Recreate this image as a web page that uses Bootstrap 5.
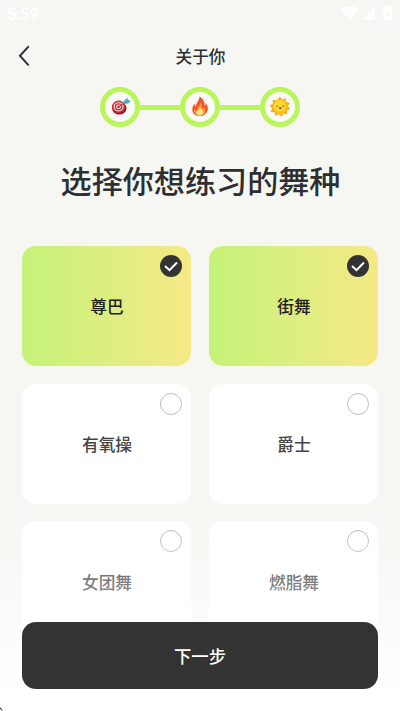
<!DOCTYPE html>
<html lang="zh-CN">
<head>
<meta charset="utf-8">
<meta name="viewport" content="width=device-width, initial-scale=1">
<title>关于你</title>
<link href="https://cdn.jsdelivr.net/npm/bootstrap@5.3.0/dist/css/bootstrap.min.css" rel="stylesheet">
<style>
  body { font-family: "Noto Sans CJK SC", sans-serif; font-weight: 500; color: #2d2f33; background: #f6f7f2; }
  .screen { height: 711px; }
  .status-bar { height: 28px; padding: 0 7px 0 7px; font: 500 16px/29px Roboto, sans-serif; color: #fff; }
  .status-icons { height: 28px; }
  .top-nav { height: 56px; padding: 0 16px; }
  .top-nav button { width: 16px; height: 24px; }
  .page-name { font-size: 16.7px; line-height: 24px; font-weight: 500; padding: 0 0 1px 1px; }
  .steps { margin-top: 3px; height: 40px; }
  .step { width: 40px; height: 40px; border: 5px solid #b9f55b; background: #f9faf7; }
  .step-line { width: 40px; height: 5px; background: #b9f55b; }
  .headline { margin: 30px 0 0; padding: 0 0 1px 1px; font-size: 31.1px; line-height: 46px; font-weight: 500; }
  .dance-grid { padding: 42px 22px 0; --bs-gutter-x: 18px; }
  .dance-list { --bs-gutter-x: 18px; --bs-gutter-y: 17.6px; }
  .dance { height: 120px; padding: 2px 0 0 1px; border-radius: 14px; font-size: 16.7px; color: #444; background: #fff; }
  .dance.picked { color: #222; background: linear-gradient(90deg, #c5f37a, #f5e985); }
  .dance.low { color: #2c2c2c; }
  .tick { top: 9px; right: 9px; width: 22px; height: 22px; border: 1px solid #bebebe; }
  .low .tick { border-color: #b4b4b4; }
  .picked .tick { border: 0; background: #333; }
  .bottom-fade { padding: 116px 22px 22px; background: linear-gradient(rgba(255,255,255,0), #fff 95%); }
  .next-btn { height: 67px; border-radius: 14px; font-size: 17.3px; font-weight: 500; color: #fff; background: #333; border: 0; }
  .corner-mark { left: 0; bottom: 0; }
</style>
</head>
<body>
<div class="screen position-relative overflow-hidden">
  <div class="status-bar d-flex justify-content-between">
    <span>5:59</span>
    <svg class="status-icons" width="52" height="28" viewBox="342 0 52 28" fill="#fff">
      <path d="M342 9.500Q351 2.500 360 9.500L351 20.300Z"/>
      <path d="M376 7V20H363Z"/>
      <path fill-rule="evenodd" d="M386 7V5.500H391V7H392Q393 7 393 8V19Q393 20 392 20H385.500Q384.500 20 384.500 19V8Q384.500 7 385.500 7ZM389.500 9L386.500 14H388.300V18L391 13H389.200Z"/>
    </svg>
  </div>

  <header class="top-nav d-flex align-items-center justify-content-between">
    <button class="btn p-0 border-0 d-flex align-items-center" aria-label="返回">
      <svg width="16" height="24" viewBox="0 0 16 24" fill="none" stroke="#2d2f33" stroke-width="2" stroke-linecap="round"><path d="M12.200 2.800L4 11.800L12.200 20.800"/></svg>
    </button>
    <h1 class="page-name m-0">关于你</h1>
    <span class="px-2"></span>
  </header>

  <div class="steps d-flex align-items-center justify-content-center">
    <div class="step rounded-circle d-flex align-items-center justify-content-center">
      <svg width="30" height="30" viewBox="0 0 30 30">
        <ellipse cx="14.300" cy="16.300" rx="7.200" ry="6.300" fill="#8d1b2a"/>
        <ellipse cx="13.600" cy="14.800" rx="6.600" ry="6.200" fill="#c9303c"/>
        <ellipse cx="13.600" cy="14.800" rx="5" ry="4.600" fill="#f8e5e5"/>
        <ellipse cx="13.600" cy="14.800" rx="3.900" ry="3.600" fill="#c9303c"/>
        <ellipse cx="13.600" cy="14.800" rx="2.500" ry="2.200" fill="#f8e5e5"/>
        <circle cx="13.600" cy="14.800" r="1.300" fill="#b3202f"/>
        <path d="M14 14.800L20.500 10.500" stroke="#8a6848" stroke-width="1.200"/>
        <path d="M18.300 11.800L19 8.300L23.200 5.800L23 8L26 9L23 11.800Z" fill="#58bdd0"/>
        <path d="M17.500 12.200L24 8.500" stroke="#2b7e97" stroke-width=".8"/>
      </svg>
    </div>
    <div class="step-line"></div>
    <div class="step rounded-circle d-flex align-items-center justify-content-center">
      <svg width="30" height="30" viewBox="0 0 30 30">
        <path d="M14.500 4.500C18.500 7 20 10 19.500 14C20.600 13.300 20.800 12 20.700 10.800C23 14 23.800 17.500 21.600 20.500C19.500 23.500 16.800 24 14.800 24C10.200 24 7.300 21.300 7.300 17.700C7.300 15 8.300 13.200 9.500 11.500C9.500 13 9.700 14 10.800 14.700C10.500 11 14.500 9 14.500 4.500Z" fill="#f0532d"/>
        <path d="M15.400 10C17 13 16.800 15 18 17C18.800 16.500 19.200 15.800 19.400 15C21.500 19.500 19.500 23.500 15 23.500C10 23.500 8.400 20 9.500 16.500C10 18 10.800 18.500 12 18.700C11.500 15 15.500 14 15.400 10Z" fill="#fc9a2c"/>
        <path d="M15 14.500C15.500 17.500 18.500 18 18 21C17.700 22.500 16.300 23.500 14.800 23.500C12.500 23.500 11 22 11.500 19.800C12.800 18.800 14.500 17.500 15 14.500Z" fill="#ffe98a"/>
      </svg>
    </div>
    <div class="step-line"></div>
    <div class="step rounded-circle d-flex align-items-center justify-content-center">
      <svg width="30" height="30" viewBox="0 0 30 30">
        <path d="M15 4.500L17.200 7.700L20.700 6L21 9.800L24.800 11L22.700 14L25.300 17L22 18.600L22.200 22.200L18.500 21.700L16.500 25L14 22L10.500 24L9.600 20.200L5.500 20L7.200 16.500L4.600 13.500L8.200 11.800L7.500 7.800L11.500 8.400Z" fill="#f9a91d"/>
        <circle cx="15" cy="14.800" r="7.600" fill="#fdbf1d"/>
        <circle cx="14.500" cy="13.800" r="5.800" fill="#ffd838"/>
        <path d="M11.500 14.300Q12.300 13.300 13.100 14.300M17.400 14.300Q18.200 13.300 19 14.300" fill="none" stroke="#68451b" stroke-width=".9"/>
        <path d="M13.500 15.500H17.200Q15.400 18.500 13.500 15.500Z" fill="#7b3a1d"/>
      </svg>
    </div>
  </div>

  <h2 class="headline text-center">选择你想练习的舞种</h2>

  <main class="dance-grid">
    <div class="row row-cols-2 dance-list mt-0">
      <div class="col mt-0"><div class="dance picked position-relative d-flex align-items-center justify-content-center">尊巴<span class="tick position-absolute rounded-circle d-flex"><svg width="22" height="22" viewBox="0 0 22 22" fill="none" stroke="#fff" stroke-width="2"><path d="M5 11L9.500 15.200L17 7.500"/></svg></span></div></div>
      <div class="col mt-0"><div class="dance picked position-relative d-flex align-items-center justify-content-center">街舞<span class="tick position-absolute rounded-circle d-flex"><svg width="22" height="22" viewBox="0 0 22 22" fill="none" stroke="#fff" stroke-width="2"><path d="M5 11L9.500 15.200L17 7.500"/></svg></span></div></div>
      <div class="col"><div class="dance position-relative d-flex align-items-center justify-content-center">有氧操<span class="tick position-absolute rounded-circle"></span></div></div>
      <div class="col"><div class="dance position-relative d-flex align-items-center justify-content-center">爵士<span class="tick position-absolute rounded-circle"></span></div></div>
      <div class="col"><div class="dance low position-relative d-flex align-items-center justify-content-center">女团舞<span class="tick position-absolute rounded-circle"></span></div></div>
      <div class="col"><div class="dance low position-relative d-flex align-items-center justify-content-center">燃脂舞<span class="tick position-absolute rounded-circle"></span></div></div>
    </div>
  </main>

  <footer class="bottom-fade position-absolute bottom-0 start-0 end-0">
    <button class="btn next-btn d-block w-100 p-0">下一步</button>
  </footer>
  <svg class="corner-mark position-absolute" width="3" height="4" viewBox="0 0 3 4"><path d="M0 .5L2 3.500" stroke="#111" fill="none"/></svg>
</div>
<script src="https://cdn.jsdelivr.net/npm/bootstrap@5.3.0/dist/js/bootstrap.bundle.min.js"></script>
</body>
</html>
